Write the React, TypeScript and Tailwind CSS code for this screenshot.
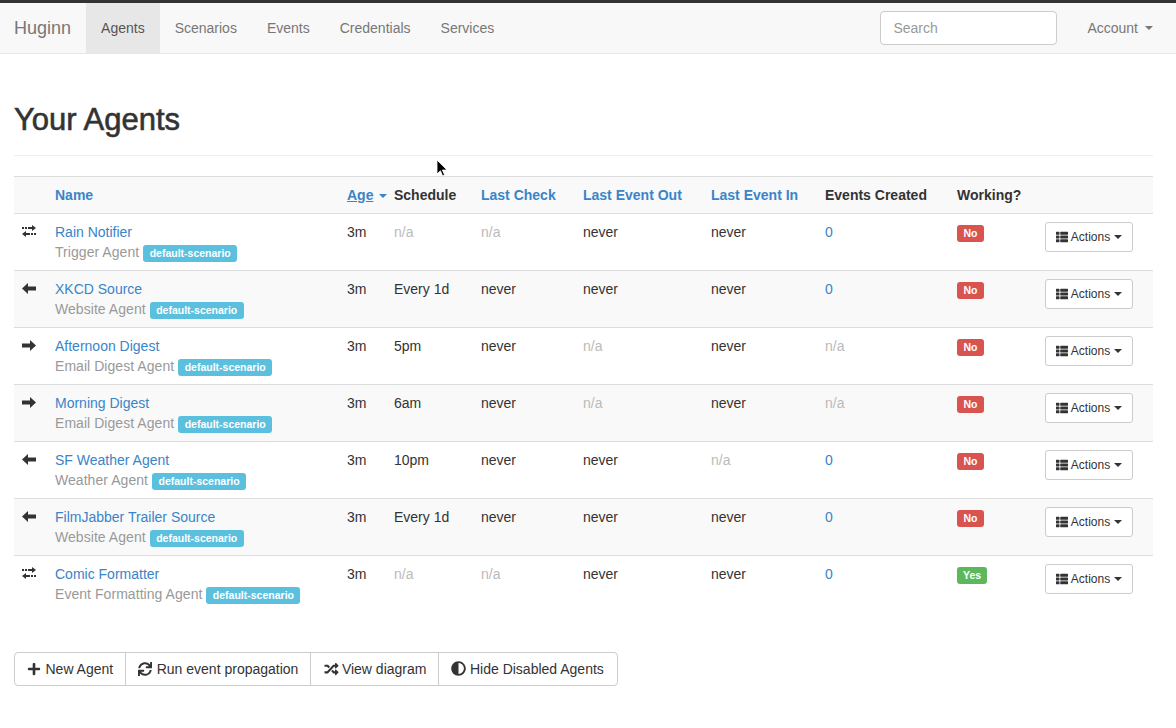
import { FaAdjust, FaPlus, FaRandom, FaSync, FaThList } from 'react-icons/fa'

type Agent = {
  name: string
  type: string
  dir: 'both' | 'in' | 'out'
  schedule: string
  lastCheck: string
  lastOut: string
  lastIn: string
  created: string
  working: boolean
}

const AGENTS: Agent[] = [
  { name: 'Rain Notifier', type: 'Trigger Agent', dir: 'both', schedule: 'n/a', lastCheck: 'n/a', lastOut: 'never', lastIn: 'never', created: '0', working: false },
  { name: 'XKCD Source', type: 'Website Agent', dir: 'in', schedule: 'Every 1d', lastCheck: 'never', lastOut: 'never', lastIn: 'never', created: '0', working: false },
  { name: 'Afternoon Digest', type: 'Email Digest Agent', dir: 'out', schedule: '5pm', lastCheck: 'never', lastOut: 'n/a', lastIn: 'never', created: 'n/a', working: false },
  { name: 'Morning Digest', type: 'Email Digest Agent', dir: 'out', schedule: '6am', lastCheck: 'never', lastOut: 'n/a', lastIn: 'never', created: 'n/a', working: false },
  { name: 'SF Weather Agent', type: 'Weather Agent', dir: 'in', schedule: '10pm', lastCheck: 'never', lastOut: 'never', lastIn: 'n/a', created: '0', working: false },
  { name: 'FilmJabber Trailer Source', type: 'Website Agent', dir: 'in', schedule: 'Every 1d', lastCheck: 'never', lastOut: 'never', lastIn: 'never', created: '0', working: false },
  { name: 'Comic Formatter', type: 'Event Formatting Agent', dir: 'both', schedule: 'n/a', lastCheck: 'n/a', lastOut: 'never', lastIn: 'never', created: '0', working: true },
]

const NAV = ['Agents', 'Scenarios', 'Events', 'Credentials', 'Services']

function Caret({ className }: { className: string }) {
  return <span className={`inline-block w-0 h-0 border-x-[4px] border-x-transparent border-t-[4px] ${className}`} />
}

function Cell({ value }: { value: string }) {
  return <span className={value === 'n/a' ? 'text-[#bbb]' : ''}>{value}</span>
}

function DirIcon({ dir }: { dir: Agent['dir'] }) {
  if (dir === 'both') {
    return (
      <svg className="block mt-[3px]" width="14" height="12" viewBox="0 0 14 12" fill="#333">
        <path d="M0 2h2v2H0zM3 2h2v2H3zM6 2h4V0l4 3-4 3V4H6z" />
        <path d="M14 8h-2v2h2zM11 8H9v2h2zM8 8H4V6L0 9l4 3v-2h4z" />
      </svg>
    )
  }
  return (
    <svg className={`block mt-[4px] ${dir === 'out' ? '-scale-x-100' : ''}`} width="14" height="11" viewBox="0 0 14 11" fill="#333">
      <path d="M0 5.5 6 0v3.5h8v4H6V11z" />
    </svg>
  )
}

function GroupButton({ icon, label, last }: { icon: React.ReactNode; label: string; last?: boolean }) {
  return (
    <button type="button" className={`h-[32px] pl-3 flex items-center text-[14px] text-[#333] ${last ? 'pr-[13px]' : 'pr-3 border-r border-[#ccc]'}`}>
      <span className="w-[18.5px] shrink-0 flex items-center">{icon}</span>
      {label}
    </button>
  )
}

export default function App() {
  return (
    <div className="relative min-h-[728px] bg-white text-[14px] leading-[20px] text-[#333] font-['Liberation_Sans',Arial,sans-serif]">
      <nav className="h-[54px] border-t-[3px] border-t-[#333] border-b border-b-[#e7e7e7] bg-[#f8f8f8] flex items-stretch pl-[14px] pr-[23px]">
        <a className="text-[18px] text-[#777] flex items-center pr-[15px]">Huginn</a>
        {NAV.map((n, i) => (
          <a key={n} className={`flex items-center px-[15px] ${i === 0 ? 'bg-[#e7e7e7] text-[#555]' : 'text-[#777]'}`}>
            {n}
          </a>
        ))}
        <div className="ml-auto flex items-center">
          <input
            placeholder="Search"
            className="w-[177px] h-[34px] px-3 bg-white border border-[#ccc] rounded text-[14px] placeholder:text-[#999] outline-none"
          />
          <a className="ml-[30px] text-[#777] flex items-center gap-[7px]">
            Account <Caret className="border-t-[#777]" />
          </a>
        </div>
      </nav>

      <div className="px-[14px] pr-[23px]">
        <h1 className="mt-[49px] pb-[19px] mb-[20px] border-b border-[#eee] text-[31px] leading-[33px] font-medium text-[#333] [-webkit-text-stroke:0.6px_#333]">
          Your Agents
        </h1>

        <table className="w-[1139px] table-fixed border-collapse">
          <colgroup>
            <col className="w-[33px]" />
            <col className="w-[292px]" />
            <col className="w-[47px]" />
            <col className="w-[87px]" />
            <col className="w-[102px]" />
            <col className="w-[128px]" />
            <col className="w-[114px]" />
            <col className="w-[132px]" />
            <col className="w-[88px]" />
            <col className="w-[116px]" />
          </colgroup>
          <thead>
            <tr className="h-[37px] bg-[#f9f9f9] border-t border-b border-[#ddd] text-left font-bold">
              <th />
              <th className="px-2 text-[#3a84c8]">Name</th>
              <th className="px-2 text-[#3a84c8] whitespace-nowrap">
                <span className="underline">Age</span> <Caret className="border-t-[#3a84c8] ml-[2px] align-middle" />
              </th>
              <th className="px-2">Schedule</th>
              <th className="px-2 text-[#3a84c8]">Last Check</th>
              <th className="px-2 text-[#3a84c8]">Last Event Out</th>
              <th className="px-2 text-[#3a84c8]">Last Event In</th>
              <th className="px-2">Events Created</th>
              <th className="px-2">Working?</th>
              <th />
            </tr>
          </thead>
          <tbody>
            {AGENTS.map((a, i) => (
              <tr key={a.name} className={`h-[57px] align-top ${i < AGENTS.length - 1 ? 'border-b border-[#ddd]' : ''} ${i % 2 === 1 ? 'bg-[#f9f9f9]' : ''}`}>
                <td className="p-2"><DirIcon dir={a.dir} /></td>
                <td className="p-2">
                  <a className="block text-[#3a84c8]">{a.name}</a>
                  <div className="text-[#999] tracking-[0.05px]">
                    {a.type}{' '}
                    <span className="inline-block align-[0px] h-[17px] px-[6.5px] rounded-[3px] bg-[#5bc0de] text-white text-[10.5px] leading-[17px] font-bold tracking-normal">default-scenario</span>
                  </div>
                </td>
                <td className="p-2">3m</td>
                <td className="p-2"><Cell value={a.schedule} /></td>
                <td className="p-2"><Cell value={a.lastCheck} /></td>
                <td className="p-2"><Cell value={a.lastOut} /></td>
                <td className="p-2"><Cell value={a.lastIn} /></td>
                <td className="p-2">
                  {a.created === '0' ? <a className="text-[#3a84c8]">0</a> : <Cell value={a.created} />}
                </td>
                <td className="p-2">
                  <span className={`inline-block h-[17px] mt-[3px] rounded-[3px] text-white text-[10.5px] leading-[17px] font-bold align-top ${a.working ? 'px-[6px] bg-[#5cb85c]' : 'px-[6.5px] bg-[#d9534f]'}`}>
                    {a.working ? 'Yes' : 'No'}
                  </span>
                </td>
                <td className="p-2">
                  <button type="button" className="w-[88px] h-[30px] border border-[#ccc] rounded-[3px] bg-white flex items-center justify-center text-[12px] text-[#333]">
                    <FaThList className="w-[12px] h-[12px] mr-[3px]" />
                    Actions
                    <Caret className="border-t-[#333] ml-[4px]" />
                  </button>
                </td>
              </tr>
            ))}
          </tbody>
        </table>

        <div className="mt-[39px] inline-flex border border-[#ccc] rounded">
          <GroupButton icon={<FaPlus className="w-[14px] h-[14px]" />} label="New Agent" />
          <GroupButton icon={<FaSync className="w-[14px] h-[14px]" />} label="Run event propagation" />
          <GroupButton icon={<FaRandom className="w-[17px] h-[14px]" />} label="View diagram" />
          <GroupButton icon={<FaAdjust className="w-[15px] h-[15px]" />} label="Hide Disabled Agents" last />
        </div>
      </div>

      <svg className="absolute left-[436px] top-[159px]" width="12" height="18" viewBox="0 0 12 18">
        <path d="M1 1v14l3.4-3.2 2.2 5 2-.9-2.2-4.9H11z" fill="#000" stroke="#fff" strokeWidth="0.8" />
      </svg>
    </div>
  )
}
